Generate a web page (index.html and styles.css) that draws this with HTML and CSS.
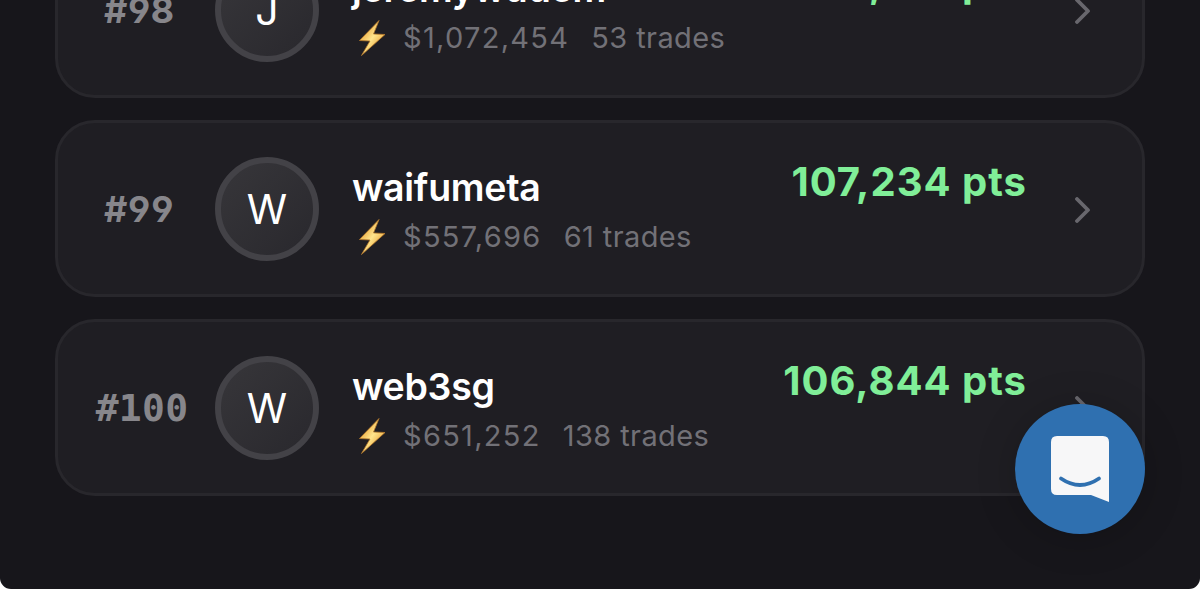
FILE: index.html
```html
<!DOCTYPE html>
<html lang="en">
<head>
    <meta charset="UTF-8">
    <meta name="viewport" content="width=device-width, initial-scale=1.0">
    <title>Leaderboard</title>
    <link rel="stylesheet" href="styles.css">
</head>
<body>
    <svg width="0" height="0" class="defs">
        <defs>
            <linearGradient id="gold" x1="0" y1="0" x2="1" y2="1">
                <stop offset="0.2" stop-color="#e9a53c"/>
                <stop offset="0.5" stop-color="#ffe58c"/>
                <stop offset="0.8" stop-color="#e8a33a"/>
            </linearGradient>
            <symbol id="bolt" viewBox="0 0 28 38">
                <path d="M21 1.5L1.5 21.5L12 22L3.5 36.5L27 15.5L15.5 15Z" fill="url(#gold)" stroke="#b67a2b" stroke-width="0.8" stroke-linejoin="round"/>
            </symbol>
            <symbol id="chevron" viewBox="0 0 16 26">
                <path d="M2 2L13 13L2 24" fill="none" stroke="#68676d" stroke-width="3.8" stroke-linecap="round" stroke-linejoin="round"/>
            </symbol>
        </defs>
    </svg>

    <div class="screen">
        <div class="list">
            <div class="card">
                <div class="rank">#98</div>
                <div class="avatar">J</div>
                <div class="info">
                    <div class="name">jeremywudem</div>
                    <div class="stats">
                        <svg class="bolt"><use href="#bolt"/></svg>
                        <span class="volume">$1,072,454</span>
                        <span class="trades">53 trades</span>
                    </div>
                </div>
                <div class="points">109,371 pts</div>
                <svg class="chevron"><use href="#chevron"/></svg>
            </div>

            <div class="card">
                <div class="rank">#99</div>
                <div class="avatar">W</div>
                <div class="info">
                    <div class="name">waifumeta</div>
                    <div class="stats">
                        <svg class="bolt"><use href="#bolt"/></svg>
                        <span class="volume">$557,696</span>
                        <span class="trades">61 trades</span>
                    </div>
                </div>
                <div class="points">107,234 pts</div>
                <svg class="chevron"><use href="#chevron"/></svg>
            </div>

            <div class="card">
                <div class="rank rank-wide">#100</div>
                <div class="avatar">W</div>
                <div class="info">
                    <div class="name">web3sg</div>
                    <div class="stats">
                        <svg class="bolt"><use href="#bolt"/></svg>
                        <span class="volume">$651,252</span>
                        <span class="trades">138 trades</span>
                    </div>
                </div>
                <div class="points">106,844 pts</div>
                <svg class="chevron"><use href="#chevron"/></svg>
            </div>
        </div>

        <div class="chat-button">
            <svg width="58" height="66" viewBox="0 0 58 66">
                <path d="M6 0H52Q58 0 58 6V66L40 59H6Q0 59 0 53V6Q0 0 6 0Z" fill="#f7f7f8"/>
                <path d="M10 42.5Q29 55.5 48 42.5" fill="none" stroke="#2f70b0" stroke-width="3.8" stroke-linecap="round"/>
            </svg>
        </div>
    </div>
</body>
</html>
```
FILE: styles.css
```css
body {
    margin: 0;
    background: #fff;
    font-family: Inter, "Liberation Sans", sans-serif;
    color: #fff;
}

.defs {
    position: absolute;
}

.screen {
    position: relative;
    height: 589px;
    overflow: hidden;
    background: #17161b;
    border-radius: 0 0 11px 11px;
}

.list {
    display: flex;
    flex-direction: column;
    gap: 22px;
    margin-top: -79px;
    padding: 0 55px;
}

.card {
    display: flex;
    align-items: center;
    box-sizing: border-box;
    height: 177px;
    padding: 0 51px 0 37px;
    background: #1f1e23;
    border: 3px solid #28272c;
    border-radius: 40px;
}

.rank {
    box-sizing: border-box;
    width: 94px;
    padding-right: 6px;
    text-align: center;
    font-family: Inter, sans-serif;
    font-size: 36px;
    font-weight: 700;
    font-feature-settings: "cv04", "tnum";
    color: #87868b;
}

.rank-wide {
    padding: 1px 0 0;
    font-family: "DejaVu Sans Mono", monospace;
    font-size: 38px;
    letter-spacing: 0.3px;
}

.avatar {
    display: flex;
    align-items: center;
    justify-content: center;
    flex-shrink: 0;
    box-sizing: border-box;
    width: 104px;
    height: 104px;
    margin-left: 26px;
    background: linear-gradient(135deg, #37363a, #29282d);
    border: 6px solid #434247;
    border-radius: 50%;
    font-size: 41px;
    line-height: 54px;
    font-weight: 400;
}

.info {
    flex: 1;
    margin-left: 33px;
    padding-top: 6px;
}

.name {
    font-size: 37.5px;
    font-weight: 600;
    line-height: 50px;
    letter-spacing: -0.3px;
}

.stats {
    display: flex;
    align-items: center;
    height: 48px;
    font-size: 29px;
    letter-spacing: 1.3px;
    color: #727177;
}

.bolt {
    width: 28px;
    height: 38px;
    margin: 0 17px 0 6px;
}

.trades {
    margin-left: 22px;
    letter-spacing: 0.4px;
}

.points {
    margin-bottom: 54px;
    font-size: 40px;
    font-weight: 700;
    letter-spacing: 1px;
    color: #80ee98;
}

.chevron {
    width: 16px;
    height: 26px;
    margin: 2px 0 0 48px;
}

/* floats above the list */
.chat-button {
    position: absolute;
    left: 1015px;
    top: 404px;
    display: flex;
    align-items: center;
    justify-content: center;
    width: 130px;
    height: 130px;
    background: #2f70b0;
    border-radius: 50%;
    box-shadow: 0 4px 40px rgba(0, 0, 0, 0.2);
}
```
